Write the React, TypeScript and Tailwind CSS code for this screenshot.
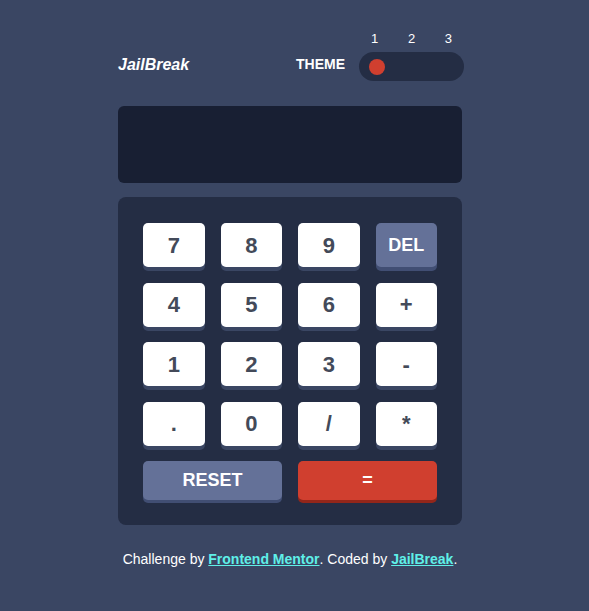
const keys = ["7", "8", "9", "DEL", "4", "5", "6", "+", "1", "2", "3", "-", ".", "0", "/", "*"];

function Key({ label }: { label: string }) {
  const isDel = label === "DEL";
  return (
    <button
      className={
        isDel
          ? "h-[44px] rounded-[5px] bg-[#647198] text-[18px] font-bold text-white shadow-[0_4px_0_#414e73]"
          : "h-[44px] rounded-[5px] bg-white text-[22px] font-bold text-[#434a59] shadow-[0_4px_0_#3a4663]"
      }
    >
      {label}
    </button>
  );
}

export default function App() {
  return (
    <main
      className="min-h-[611px] bg-[#3a4663] text-white"
      style={{ fontFamily: '"Liberation Sans", Arial, sans-serif' }}
    >
      <div className="ml-[118px] w-[344px] pt-[30px]">
        <header className="flex items-end justify-between">
          <h1 className="mb-[4px] text-[16px] font-bold italic">JailBreak</h1>
          <div className="-mr-[2px] flex items-end gap-[14px]">
            <span className="mb-[6px] text-[14px] font-bold uppercase">Theme</span>
            <div className="flex flex-col">
              <div className="mt-[1px] flex justify-between px-[12px] text-[13px] leading-[16px]">
                <span>1</span>
                <span>2</span>
                <span>3</span>
              </div>
              <div className="mt-[5px] flex h-[29px] w-[105px] items-center rounded-full bg-[#242d44] px-[10px]">
                <span className="h-[16px] w-[16px] rounded-full bg-[#d03f2f]" />
              </div>
            </div>
          </div>
        </header>

        <div className="mt-[25px] h-[77px] rounded-[6px] bg-[#181f33]" />

        <section className="mt-[14px] rounded-[8px] bg-[#242d44] px-[25px] pb-[25px] pt-[26px]">
          <div className="grid grid-cols-4 gap-x-[16px] gap-y-[15.5px]">
            {keys.map((k) => (
              <Key key={k} label={k} />
            ))}
          </div>
          <div className="mt-[15.5px] grid grid-cols-2 gap-x-[16px]">
            <button className="h-[39px] rounded-[5px] bg-[#647198] text-[18px] font-bold text-white shadow-[0_3px_0_#414e73]">
              RESET
            </button>
            <button className="h-[39px] rounded-[5px] bg-[#d03f2f] text-[18px] font-bold text-white shadow-[0_3px_0_#93261a]">
              =
            </button>
          </div>
        </section>

        <footer className="mt-[24px] text-center text-[14px]">
          Challenge by{" "}
          <a href="#" className="font-bold text-[#5ff0e8] underline">
            Frontend Mentor
          </a>
          . Coded by{" "}
          <a href="#" className="font-bold text-[#5ff0e8] underline">
            JailBreak
          </a>
          .
        </footer>
      </div>
    </main>
  );
}
